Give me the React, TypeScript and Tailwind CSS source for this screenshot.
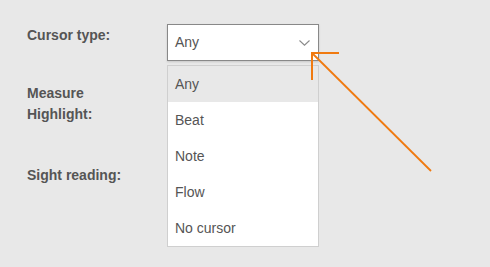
import React from "react";

const options = ["Any", "Beat", "Note", "Flow", "No cursor"];

export default function App() {
  return (
    <div
      className="relative w-[490px] h-[267px] bg-[#e8e8e8] overflow-hidden"
      style={{ fontFamily: '"Liberation Sans", Arial, sans-serif' }}
    >
      <div className="flex flex-col pl-[27px] pt-[24px]">
        <div className="flex h-[37px]">
          <div className="w-[140px] pt-[1px] text-[14px] leading-[21px] font-bold text-[#555]">
            Cursor type:
          </div>
          <div className="w-[152px] h-[37px] bg-white border border-[#888] shadow-[0_1px_2px_rgba(0,0,0,0.15)] flex items-center justify-between pl-[7px] pr-[7px]">
            <span className="text-[14px] text-[#555]">Any</span>
            <svg width="11" height="6" viewBox="0 0 11 6" className="mr-[1px]">
              <path d="M0.5 0.5 L5.5 5.2 L10.5 0.5" fill="none" stroke="#8a8a8a" strokeWidth="1.1" />
            </svg>
          </div>
        </div>
        <div className="mt-[22px] w-[140px] text-[14px] leading-[21px] font-bold text-[#555]">
          Measure
          <br />
          Highlight:
        </div>
        <div className="mt-[40px] w-[140px] text-[14px] leading-[21px] font-bold text-[#555]">
          Sight reading:
        </div>
      </div>

      <div className="absolute left-[167px] top-[65px] w-[152px] bg-white border border-[#cfcfcf] flex flex-col">
        {options.map((o, i) => (
          <div
            key={o}
            className={
              "h-[36px] flex items-center pl-[7px] text-[14px] text-[#555] " +
              (i === 0 ? "bg-[#e8e8e8]" : "")
            }
          >
            {o}
          </div>
        ))}
      </div>

      <svg className="absolute left-0 top-0" width="490" height="267">
        <path d="M312 53 H339" stroke="#f07a10" strokeWidth="2" fill="none" />
        <path d="M312 52 V80" stroke="#f07a10" strokeWidth="2" fill="none" />
        <path d="M312.5 53.5 L431 171" stroke="#f07a10" strokeWidth="1.8" fill="none" />
      </svg>
    </div>
  );
}
